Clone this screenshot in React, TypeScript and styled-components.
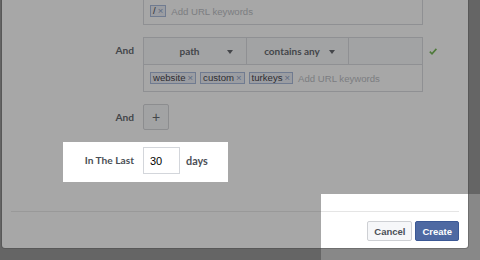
import styled, { createGlobalStyle } from "styled-components";

const GlobalStyle = createGlobalStyle`
  html,
  body {
    margin: 0;
    height: 100%;
    overflow: hidden;
    background: #888888;
    font-family: "Liberation Sans", Arial, sans-serif;
  }
`;

const Page = styled.div`
  position: relative;
  display: flow-root;
  height: 260px;
`;

const Dialog = styled.div`
  width: 466px;
  margin: -42px 0 0 2px;
  padding-top: 12px;
  background: #fff;
  border-radius: 0 0 3px 3px;
  box-shadow: 0 0 0 1px rgba(0, 0, 0, 0.18);
`;

const Row = styled.div<{ gap?: number }>`
  display: flex;
  align-items: flex-start;
  margin-top: ${({ gap }) => gap ?? 0}px;
`;

const Label = styled.div<{ height?: number }>`
  width: 132px;
  margin-right: 9px;
  height: ${({ height }) => height ?? 27}px;
  line-height: ${({ height }) => height ?? 27}px;
  text-align: right;
  font-family: Lato, sans-serif;
  font-weight: 700;
  font-size: 10.2px;
  color: #4b4f56;
`;

const RuleBox = styled.div`
  width: 278px;
  border: 1px solid #d3d6db;
`;

const RuleHeader = styled.div`
  display: grid;
  grid-template-columns: 103px 102px 1fr;
  height: 26px;
  background: #f6f7f9;
  border-bottom: 1px solid #d3d6db;
`;

const Select = styled.div`
  position: relative;
  border-right: 1px solid #d3d6db;
  padding-right: 11px;
  line-height: 26px;
  text-align: center;
  font-family: Lato, sans-serif;
  font-weight: 700;
  font-size: 10px;
  color: #4b4f56;

  &::after {
    content: "";
    position: absolute;
    right: 13px;
    top: 12px;
    border-left: 3.5px solid transparent;
    border-right: 3.5px solid transparent;
    border-top: 4px solid #4b4f56;
  }
`;

const EmptyCell = styled.div``;

const Tokens = styled.div`
  display: flex;
  align-items: center;
  gap: 4px;
  height: 26px;
  padding-left: 6px;
`;

const Token = styled.span`
  display: inline-flex;
  align-items: center;
  gap: 2px;
  height: 10px;
  padding: 0 2px;
  border: 1px solid #9cb0d6;
  background: #e9edf6;
  font-size: 9.6px;
  line-height: 10px;
  color: #1d2129;

  b {
    font-weight: 400;
    font-size: 9.5px;
    color: #7a8db8;
  }
`;

const Placeholder = styled.span`
  margin-left: 1px;
  font-size: 9.6px;
  color: #b0b3b9;
`;

const Check = styled.svg`
  margin: 11px 0 0 6px;
`;

const PlusButton = styled.button`
  width: 26px;
  height: 26px;
  padding: 0;
  border: 1px solid #ced0d4;
  border-radius: 2px;
  background: #f6f7f9;
  font-family: "Liberation Sans", Arial, sans-serif;
  font-size: 14px;
  line-height: 22px;
  color: #4b4f56;
`;

const DaysInput = styled.input`
  box-sizing: border-box;
  width: 37px;
  height: 27px;
  padding: 0 0 0 6px;
  border: 1px solid #d3d6db;
  font-family: "Liberation Sans", Arial, sans-serif;
  font-size: 11px;
  color: #000;
  outline: none;
`;

const Unit = styled.span`
  margin-left: 6px;
  line-height: 27px;
  font-family: Lato, sans-serif;
  font-weight: 700;
  font-size: 10.8px;
  color: #4b4f56;
`;

const Footer = styled.div`
  display: flex;
  justify-content: flex-end;
  gap: 3px;
  margin: 37px 9px 0;
  padding: 9px 0 7px;
  border-top: 1px solid #e5e5e5;
`;

const Button = styled.button<{ primary?: boolean }>`
  height: 20px;
  padding: 0 6px;
  border: 1px solid ${({ primary }) => (primary ? "#3b5895" : "#ced0d4")};
  border-radius: 2px;
  background: ${({ primary }) => (primary ? "#4e69a2" : "#f6f7f9")};
  color: ${({ primary }) => (primary ? "#fff" : "#4b4f56")};
  font-family: "Liberation Sans", Arial, sans-serif;
  font-weight: 700;
  font-size: 9.5px;
`;

const Overlay = styled.svg`
  position: absolute;
  inset: 0;
  width: 480px;
  height: 260px;
  pointer-events: none;
`;

const CheckIcon = () => (
  <Check width="8" height="7" viewBox="0 0 8 7">
    <path d="M0.8 3.6 L3 5.8 L7.4 0.9" fill="none" stroke="#5fae3a" strokeWidth="1.6" />
  </Check>
);

const App = () => {
  return (
    <Page>
      <GlobalStyle />
      <Dialog>
        {/* first rule is scrolled up, only its keyword row is in view */}
        <Row>
          <Label />
          <RuleBox>
            <RuleHeader>
              <Select />
              <Select />
              <EmptyCell />
            </RuleHeader>
            <Tokens>
              <Token>
                / <b>×</b>
              </Token>
              <Placeholder>Add URL keywords</Placeholder>
            </Tokens>
          </RuleBox>
        </Row>

        <Row gap={12}>
          <Label>And</Label>
          <RuleBox>
            <RuleHeader>
              <Select>path</Select>
              <Select>contains any</Select>
              <EmptyCell />
            </RuleHeader>
            <Tokens>
              <Token>
                website <b>×</b>
              </Token>
              <Token>
                custom <b>×</b>
              </Token>
              <Token>
                turkeys <b>×</b>
              </Token>
              <Placeholder>Add URL keywords</Placeholder>
            </Tokens>
          </RuleBox>
          <CheckIcon />
        </Row>

        <Row gap={12}>
          <Label height={26}>And</Label>
          <PlusButton>+</PlusButton>
        </Row>

        <Row gap={17}>
          <Label>In The Last</Label>
          <DaysInput defaultValue="30" />
          <Unit>days</Unit>
        </Row>

        <Footer>
          <Button>Cancel</Button>
          <Button primary>Create</Button>
        </Footer>
      </Dialog>

      <Overlay>
        <path
          fillRule="evenodd"
          fill="rgba(60, 60, 60, 0.45)"
          d="M0 0H480V260H0Z M63 142V182H228V142Z M321 194V260H480V194Z"
        />
      </Overlay>
    </Page>
  );
};

export default App;
